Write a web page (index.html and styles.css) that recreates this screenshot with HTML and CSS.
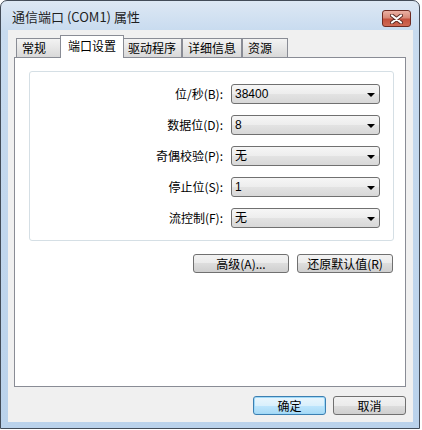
FILE: index.html
```html
<!DOCTYPE html>
<html lang="zh-CN">
<head>
    <meta charset="UTF-8">
    <title>通信端口 (COM1) 属性</title>
    <link rel="stylesheet" href="styles.css">
</head>
<body>
    <div class="window">
        <div class="titlebar">
            <span class="title">通信端口 (COM1) 属性</span>
            <div class="close">
                <svg width="13" height="10" viewBox="0 0 13 10">
                    <path d="M2 1.5 L11 8.5 M11 1.5 L2 8.5" stroke="#5a2a24" stroke-width="4" stroke-linecap="round"/>
                    <path d="M2 1.5 L11 8.5 M11 1.5 L2 8.5" stroke="#ffffff" stroke-width="2.2" stroke-linecap="round"/>
                </svg>
            </div>
        </div>

        <div class="client">
            <div class="tabs">
                <div class="tab">常规</div>
                <div class="tab active">端口设置</div>
                <div class="tab">驱动程序</div>
                <div class="tab">详细信息</div>
                <div class="tab">资源</div>
            </div>

            <div class="panel">
                <div class="group">
                    <div class="row">
                        <label>位/秒(B):</label>
                        <div class="combo"><span>38400</span><i class="arrow"></i></div>
                    </div>
                    <div class="row">
                        <label>数据位(D):</label>
                        <div class="combo"><span>8</span><i class="arrow"></i></div>
                    </div>
                    <div class="row">
                        <label>奇偶校验(P):</label>
                        <div class="combo"><span>无</span><i class="arrow"></i></div>
                    </div>
                    <div class="row">
                        <label>停止位(S):</label>
                        <div class="combo"><span>1</span><i class="arrow"></i></div>
                    </div>
                    <div class="row">
                        <label>流控制(F):</label>
                        <div class="combo"><span>无</span><i class="arrow"></i></div>
                    </div>
                </div>

                <div class="actions">
                    <button class="btn wide">高级(A)...</button>
                    <button class="btn wide">还原默认值(R)</button>
                </div>
            </div>

            <div class="footer">
                <button class="btn default">确定</button>
                <button class="btn">取消</button>
            </div>
        </div>
    </div>
</body>
</html>
```

FILE: styles.css
```css
body {
    margin: 0;
    background: #ffffff;
    font-family: "Noto Sans CJK SC", "Liberation Sans", sans-serif;
    font-size: 12px;
    color: #000;
}

.window {
    width: 420px;
    height: 429px;
    box-sizing: border-box;
    border: 1px solid #434c58;
    border-radius: 7px 7px 0 0;
    background: linear-gradient(#dde8f4 0px, #c8dbef 30px, #bad2eb 100%);
    padding: 0 6px 6px 7px;
    display: flex;
    flex-direction: column;
}

/* title bar */
.titlebar {
    height: 29px;
    display: flex;
    align-items: flex-start;
    justify-content: space-between;
}
.title {
    margin: 6px 0 0 4px;
    font-size: 13px;
    line-height: 20px;
    color: #1e1e1e;
}
.close {
    width: 29px;
    height: 17px;
    box-sizing: border-box;
    margin: 9px 2px 0 0;
    border: 1px solid #6e2b22;
    border-radius: 3px;
    background: linear-gradient(#ebb1a4 0%, #d88a78 45%, #c4513d 55%, #cf6a55 100%);
    display: flex;
    align-items: center;
    justify-content: center;
}

/* client area */
.client {
    height: 392px;
    background: #f0f0f0;
    padding: 5px 7px 0 6px;
    box-sizing: border-box;
}

.tabs {
    height: 22px;
    display: flex;
    align-items: flex-end;
    padding-left: 2px;
}
.tab {
    height: 19px;
    min-width: 46px;
    box-sizing: border-box;
    padding: 0 5px;
    border: 1px solid #898c95;
    border-bottom: none;
    background: linear-gradient(#f3f3f3, #e6e6e6 50%, #d9d9d9);
    line-height: 18px;
}
.tab.active {
    height: 23px;
    margin: 0 -2px -1px;
    padding: 0 7px;
    background: #ffffff;
    position: relative;
    z-index: 1;
    line-height: 20px;
}

.panel {
    height: 330px;
    box-sizing: border-box;
    border: 1px solid #898c95;
    background: #ffffff;
    padding: 13px 11px 0 14px;
}

.group {
    height: 170px;
    box-sizing: border-box;
    border: 1px solid #d5dfe5;
    border-radius: 3px;
    padding: 12px 13px 0 0;
    display: flex;
    flex-direction: column;
    gap: 11px;
}
.row {
    height: 20px;
    display: flex;
    justify-content: flex-end;
    align-items: center;
    gap: 8px;
}
.row label {
    line-height: 20px;
}

.combo {
    width: 149px;
    height: 20px;
    box-sizing: border-box;
    border: 1px solid #707070;
    border-radius: 3px;
    background: linear-gradient(#f6f6f6 0%, #ededed 50%, #e3e3e3 50%, #d8d8d8 100%);
    display: flex;
    align-items: center;
    justify-content: space-between;
    padding: 0 4px 0 3px;
}
.combo span {
    font-family: "Liberation Sans", "Noto Sans CJK SC", sans-serif;
    font-size: 12px;
    line-height: 18px;
}
.arrow {
    width: 0;
    height: 0;
    border-left: 4px solid transparent;
    border-right: 4px solid transparent;
    border-top: 4px solid #000;
    margin-top: 1px;
}

.btn {
    height: 19px;
    box-sizing: border-box;
    border: 1px solid #707070;
    border-radius: 3px;
    background: linear-gradient(#f2f2f2 0%, #ebebeb 50%, #dddddd 50%, #cfcfcf 100%);
    font-family: "Noto Sans CJK SC", "Liberation Sans", sans-serif;
    font-size: 12px;
    line-height: 16px;
    padding: 0;
    color: #000;
    width: 73px;
}
.btn.wide {
    width: 96px;
}
.btn.default {
    border-color: #3c7fb1;
    background: linear-gradient(#eaf6fd 0%, #d9f0fc 50%, #bee6fd 50%, #a7d9f5 100%);
    box-shadow: inset 0 0 0 1px #9fd9f8;
}

.actions {
    margin-top: 13px;
    padding-right: 1px;
    display: flex;
    justify-content: flex-end;
    gap: 8px;
}

.footer {
    margin-top: 9px;
    display: flex;
    justify-content: flex-end;
    gap: 7px;
}
```
